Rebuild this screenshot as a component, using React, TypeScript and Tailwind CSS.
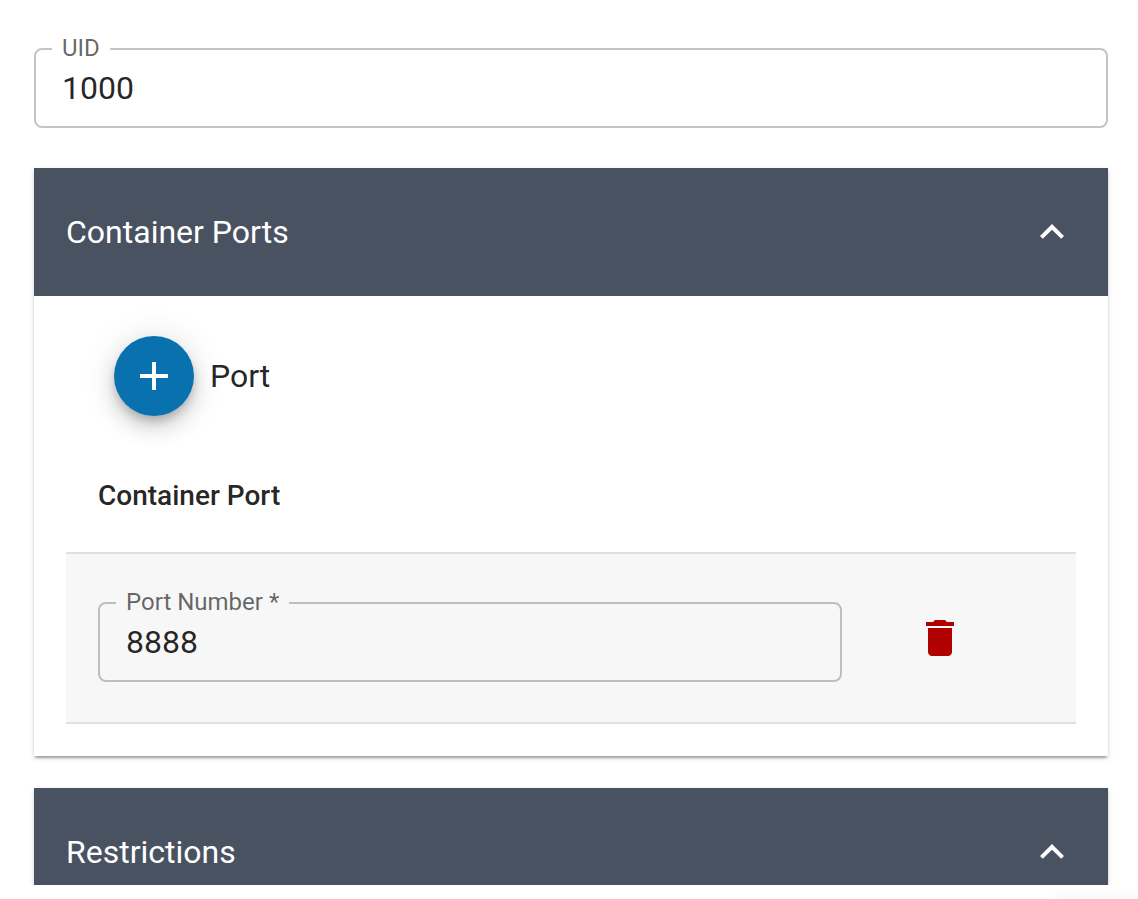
import { useId, useState, type ReactNode } from "react";

function OutlinedField({ label, initial }: { label: string; initial: string }) {
  const id = useId();
  const [value, setValue] = useState(initial);
  return (
    <fieldset className="w-full min-w-0 rounded-lg border-2 border-black/23 px-4 pb-[11px]">
      <legend className="h-6 px-2.5 text-2xl leading-6 text-black/60">
        <label htmlFor={id} className="block leading-[22px]">{label}</label>
      </legend>
      <input
        id={id}
        value={value}
        onChange={(e) => setValue(e.target.value)}
        className="block h-[54px] w-full bg-transparent px-2.5 text-[32px] text-black/87 outline-none"
      />
    </fieldset>
  );
}

function Panel({ title, children }: { title: string; children?: ReactNode }) {
  const [open, setOpen] = useState(true);
  return (
    <section className="mb-8 bg-white shadow-[0_4px_2px_-2px_rgba(0,0,0,0.2),0_2px_2px_0_rgba(0,0,0,0.14),0_2px_6px_0_rgba(0,0,0,0.12)]">
      <button
        type="button"
        aria-expanded={open}
        onClick={() => setOpen(!open)}
        className="flex h-32 w-full items-center justify-between bg-[#495261] px-8 text-left text-[32px] leading-12 text-white"
      >
        <span>{title}</span>
        <svg viewBox="0 0 24 24" className={open ? "size-12" : "size-12 rotate-180"} fill="currentColor" aria-hidden="true">
          <path d="M12 8l-6 6 1.41 1.41L12 10.83l4.59 4.58L18 14z" />
        </svg>
      </button>
      {open && children}
    </section>
  );
}

export default function App() {
  const [ports, setPorts] = useState([{ key: 0, value: "8888" }]);
  const addPort = () => setPorts([...ports, { key: Date.now(), value: "" }]);

  return (
    <div className="flex h-screen flex-col bg-white font-[Roboto,sans-serif] text-black/87">
      <main className="min-h-0 flex-1 overflow-y-auto pt-[37px] pr-[30px] pl-[34px] [scrollbar-width:none]">
        <div className="mb-10">
          <OutlinedField label="UID" initial="1000" />
        </div>

        <Panel title="Container Ports">
          <div className="px-8 pt-10 pb-8">
            <div className="mb-6 flex items-center gap-4 pl-12">
              <button
                type="button"
                id="add-port"
                aria-label="Add port"
                onClick={addPort}
                className="flex size-20 items-center justify-center rounded-full bg-[#0972ae] text-white shadow-[0_6px_10px_-2px_rgba(0,0,0,0.2),0_12px_20px_0_rgba(0,0,0,0.14),0_2px_36px_0_rgba(0,0,0,0.12)]"
              >
                <svg viewBox="0 0 24 24" className="size-12" fill="currentColor" aria-hidden="true">
                  <path d="M19 13h-6v6h-2v-6H5v-2h6V5h2v6h6v2z" />
                </svg>
              </button>
              <label htmlFor="add-port" className="text-[32px] leading-12">Port</label>
            </div>

            <table className="w-full table-fixed border-separate border-spacing-0">
              <thead>
                <tr>
                  <th scope="col" className="w-4/5 border-b-2 border-[#e0e0e0] p-8 text-left text-[28px] leading-12 font-medium">
                    Container Port
                  </th>
                  <td className="border-b-2 border-[#e0e0e0]" />
                </tr>
              </thead>
              <tbody>
                {ports.map((port) => (
                  <tr key={port.key} className="bg-[#f7f7f7]">
                    <td className="border-b-2 border-[#e0e0e0] px-8 pt-[37px] pb-10">
                      <OutlinedField label="Port Number *" initial={port.value} />
                    </td>
                    <td className="border-b-2 border-[#e0e0e0] px-8 align-middle">
                      <button
                        type="button"
                        aria-label="Delete port"
                        onClick={() => setPorts(ports.filter((p) => p.key !== port.key))}
                        className="block p-2.5 text-[#b00000]"
                      >
                        <svg viewBox="0 0 24 24" className="size-12" fill="currentColor" aria-hidden="true">
                          <path d="M6 19c0 1.1.9 2 2 2h8c1.1 0 2-.9 2-2V7H6v12zM19 4h-3.5l-1-1h-5l-1 1H5v2h14V4z" />
                        </svg>
                      </button>
                    </td>
                  </tr>
                ))}
              </tbody>
            </table>
          </div>
        </Panel>

        <Panel title="Restrictions" />
      </main>
      <footer className="flex h-3.5 shrink-0 items-end justify-end overflow-hidden bg-white">
        <div className="w-20 shadow-[0_0_10px_3px_rgba(0,0,0,0.05)]" />
      </footer>
    </div>
  );
}
